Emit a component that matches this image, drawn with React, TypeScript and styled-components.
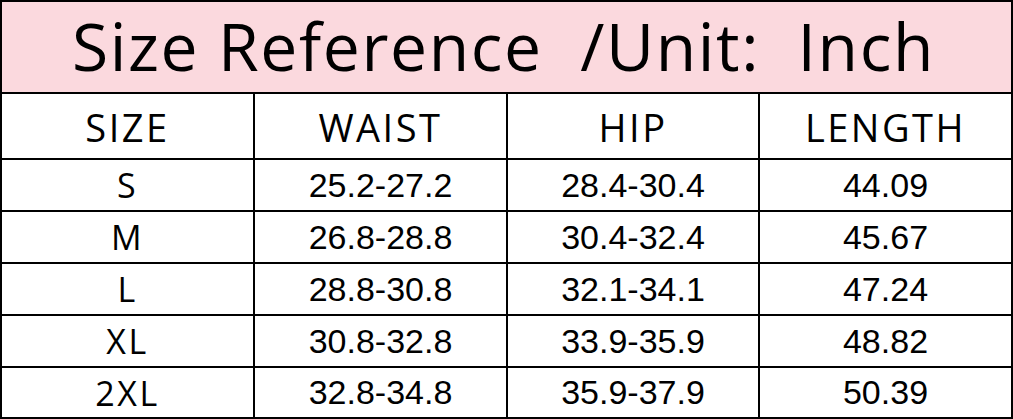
import React from "react";
import styled, { createGlobalStyle } from "styled-components";

const GlobalStyle = createGlobalStyle`
  html, body {
    margin: 0;
    padding: 0;
    background: #ffffff;
  }
`;

const Chart = styled.div`
  display: grid;
  grid-template-columns: 251px 251px 250px 251px;
  grid-template-rows: 90px 64px 50px 50px 50px 50px 49px;
  gap: 2px;
  padding: 2px;
  width: 1013px;
  height: 419px;
  box-sizing: border-box;
  background: #000000;
  color: #000000;
`;

const Title = styled.div`
  grid-column: 1 / -1;
  background: #fbd9de;
  display: flex;
  align-items: center;
  justify-content: center;
  font-family: "Open Sans", sans-serif;
  font-size: 66px;
  letter-spacing: 1.6px;
  white-space: pre;
  padding-right: 6px;
  padding-bottom: 4px;
`;

const Cell = styled.div<{ $num?: boolean; $head?: boolean }>`
  background: #ffffff;
  display: flex;
  align-items: center;
  justify-content: center;
  font-family: ${(p) =>
    p.$num ? '"Liberation Sans", Arial, sans-serif' : '"Open Sans", sans-serif'};
  font-size: ${(p) => (p.$head ? "38px" : "34px")};
  letter-spacing: ${(p) => (p.$num ? "0" : "2.5px")};
  padding-top: ${(p) => (p.$head ? "2px" : "0")};
`;

const headers = ["SIZE", "WAIST", "HIP", "LENGTH"];

const rows = [
  ["S", "25.2-27.2", "28.4-30.4", "44.09"],
  ["M", "26.8-28.8", "30.4-32.4", "45.67"],
  ["L", "28.8-30.8", "32.1-34.1", "47.24"],
  ["XL", "30.8-32.8", "33.9-35.9", "48.82"],
  ["2XL", "32.8-34.8", "35.9-37.9", "50.39"],
];

export default function App() {
  return (
    <>
      <GlobalStyle />
      <Chart>
        <Title>{"Size Reference  /Unit:  Inch"}</Title>
        {headers.map((h) => (
          <Cell key={h} $head>
            {h}
          </Cell>
        ))}
        {rows.map((r) =>
          r.map((v, i) => (
            <Cell key={r[0] + i} $num={i > 0}>
              {v}
            </Cell>
          ))
        )}
      </Chart>
    </>
  );
}
